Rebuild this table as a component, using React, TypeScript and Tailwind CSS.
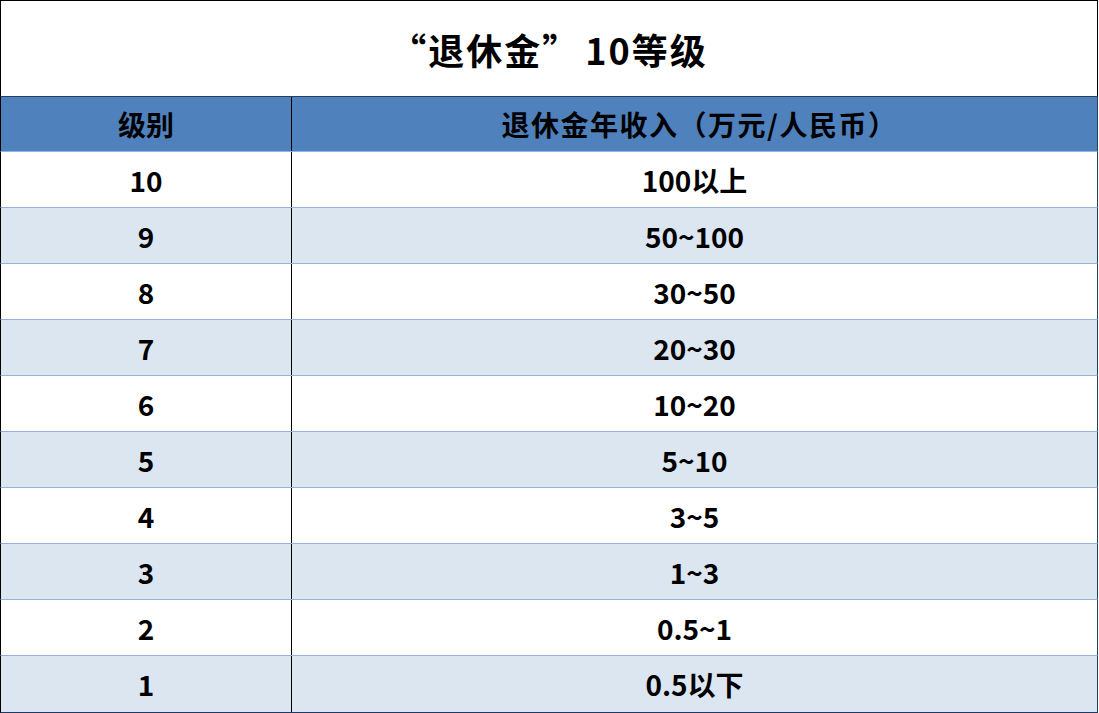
const rows: [string, string][] = [
  ["10", "100以上"],
  ["9", "50~100"],
  ["8", "30~50"],
  ["7", "20~30"],
  ["6", "10~20"],
  ["5", "5~10"],
  ["4", "3~5"],
  ["3", "1~3"],
  ["2", "0.5~1"],
  ["1", "0.5以下"],
];

export default function App() {
  return (
    <div
      className="w-[1098px] bg-white text-black font-bold"
      style={{ fontFamily: '"Noto Sans CJK SC", "Noto Sans", sans-serif' }}
    >
      {/* title */}
      <div className="h-[96px] border-t border-l border-r border-black flex items-center justify-center text-[36px] leading-none tracking-[2px]">
        “退休金”<span className="ml-[5px]">10等级</span>
      </div>

      {/* header */}
      <div className="grid grid-cols-[291px_1fr] h-[56px] bg-[#4f81bd] border-t border-t-[#23405f] border-b border-b-[#8db4e2] border-l border-l-black border-r border-r-[#23405f] text-[28px] leading-none">
        <div className="flex items-center justify-center border-r border-black">级别</div>
        <div className="flex items-center justify-center tracking-[1.5px] pl-[10px]">退休金年收入（万元/人民币）</div>
      </div>

      {/* body */}
      {rows.map(([level, income], i) => (
        <div
          key={level}
          className={
            "grid grid-cols-[291px_1fr] border-l border-l-black border-r border-r-[#23405f] text-[28px] leading-none " +
            (i % 2 === 1 ? "bg-[#dce6f1] " : "bg-white ") +
            (i === rows.length - 1 ? "h-[57px] border-b border-b-[#1f3864]" : "h-[56px] border-b border-b-[#95b3d7]")
          }
        >
          <div className="flex items-center justify-center border-r border-black">{level}</div>
          <div className="flex items-center justify-center">{income}</div>
        </div>
      ))}
    </div>
  );
}
